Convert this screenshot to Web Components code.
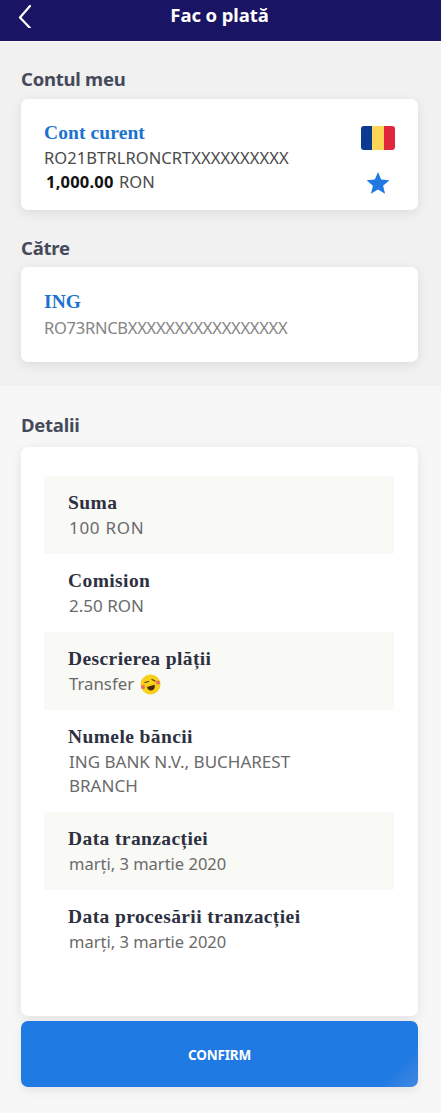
<!DOCTYPE html>
<html lang="ro"><head><meta charset="utf-8"><title>Fac o plată</title>
<style>
html,body{margin:0;padding:0;background:#f7f7f7}
body{width:441px;height:1113px;overflow:hidden;font-family:"Noto Sans","Open Sans",sans-serif}
</style></head><body>
<pay-app></pay-app>
<script>
const sans='"Noto Sans","Open Sans",sans-serif', serif='"Liberation Serif","DejaVu Serif",serif';
function def(name,css,html){
  customElements.define(name,class extends HTMLElement{
    constructor(){super();const s=this.attachShadow({mode:'open'});s.innerHTML=`<style>${css}</style>${html}`;}
  });
}
def('top-bar',`:host{display:flex;align-items:center;justify-content:center;position:relative;height:41px;background:#1a1464;color:#fff;border-bottom:1px solid #fafafa;font:700 18.5px/1 ${sans};letter-spacing:-.1px}
  svg{position:absolute;left:18px;top:4px}
  span{margin-top:-11px;margin-left:-2px}`,
 `<svg width="14" height="24" viewBox="0 0 14 24" fill="none" stroke="#fff" stroke-width="2.2" stroke-linecap="round" stroke-linejoin="round"><path d="M12 2 2 13.5 12 24"/></svg><span><slot></slot></span>`);
def('section-title',`:host{display:block;font:700 18.500px/24px ${sans};color:#454a5a;letter-spacing:-.25px}`,`<slot></slot>`);
def('white-card',`:host{display:block;background:#fff;border-radius:7px;box-shadow:0 3px 12px rgba(0,0,0,.09);box-sizing:border-box}`,`<slot></slot>`);
def('acct-head',`:host{display:block;font:700 19.500px/24px ${serif};letter-spacing:.1px;color:#1a73cf;margin-bottom:1px}`,`<slot></slot>`);
def('acct-line',`:host{display:block;font:400 16.500px/24px ${sans};letter-spacing:var(--ls,.07px);color:var(--c,#4a4a4a)}
  ::slotted(b){color:#111;font-weight:700;margin-left:2px;margin-right:1px;letter-spacing:.2px}`,`<slot></slot>`);
def('ro-flag',`:host{display:flex;width:34px;height:24px;border-radius:3px;overflow:hidden}
  i{flex:1}`,`<i style="background:#0b3a94"></i><i style="background:#fdd655"></i><i style="background:#e0273e"></i>`);
def('star-icon',`:host{display:block;width:24px;height:24px}svg{display:block}`,
 `<svg width="24" height="24" viewBox="0 0 24 24"><path fill="#2079e0" d="M12 1l3.200 7.600 8.200.7-6.300 5.400 1.950 8-7.050-4.300-7.050 4.300 1.950-8L.6 9.300l8.200-.7z"/></svg>`);
def('detail-row',`:host{display:block;padding:14px 24px 14px;}
  :host([shade]){background:#f9f9f6}
  .l{font:700 19.500px/26px ${serif};letter-spacing:.4px;color:#2d3040}
  .v{font:400 var(--fs,16.800px)/24px ${sans};letter-spacing:var(--ls,0);color:#6a6a6a;margin-left:1px}`,
 `<div class="l"><slot name="label"></slot></div><div class="v"><slot></slot></div>`);
def('emoji-laugh',`:host{display:inline-block;width:21px;height:21px;vertical-align:-5px;margin-left:2px}svg{display:block}`,
 `<svg width="21" height="21" viewBox="0 0 21 21"><circle cx="10.500" cy="10.500" r="10" fill="#f7cf1c"/><circle cx="3" cy="13" r="2" fill="#ef6a5e"/><circle cx="18" cy="8.500" r="2" fill="#ef6a5e"/><path d="M5 8.500 8.500 7.500M12 5.500l3 1.500" stroke="#5a4000" stroke-width="1.300" stroke-linecap="round"/><path d="M7 13 14.500 10.800C15.500 13.500 14 16.200 11.500 16.500 9.200 16.800 7.500 15.300 7 13z" fill="#4a2a00"/></svg>`);
def('confirm-button',`:host{display:flex;align-items:center;justify-content:center;box-sizing:border-box;padding-top:4px;height:66px;border-radius:7px;background:linear-gradient(135deg,#1f7ae3 0 91%,#4287e0 100%);color:#fff;font:700 13.500px/1 ${sans};letter-spacing:-.2px;box-shadow:0 4px 10px rgba(0,0,0,.08)}`,`<slot></slot>`);
def('pay-app',`:host{display:block;width:441px;height:1113px;overflow:hidden;background:#f7f7f7}
  .upper{height:344px;background:#f1f1f1;box-sizing:border-box;padding:25px 23px 0 21px}
  .lower{box-sizing:border-box;padding:27px 23px 0 21px}
  .c1{height:111px;margin-top:7px;padding:22px 23px 0 23px;display:flex;justify-content:space-between}
  .side{display:flex;flex-direction:column;align-items:center;gap:21px;padding-top:5px}
  .t2{margin-top:26px}
  .c2{height:95px;margin-top:7px;padding:23px 23px 0}
  .c3{height:569px;padding:29px 24px 0 23px;margin-top:10px}
  confirm-button{margin-top:5px}
  .h{margin-top:8px}`,
 `<top-bar>Fac o plată</top-bar>
 <div class="upper">
  <section-title>Contul meu</section-title>
  <white-card class="c1 h">
    <div>
      <acct-head>Cont curent</acct-head>
      <acct-line>RO21BTRLRONCRTXXXXXXXXXX</acct-line>
      <acct-line><b>1,000.00</b> RON</acct-line>
    </div>
    <div class="side"><ro-flag></ro-flag><star-icon></star-icon></div>
  </white-card>
  <section-title class="t2">Către</section-title>
  <white-card class="c2">
    <acct-head>ING</acct-head>
    <acct-line style="--c:#858585;--ls:-.28px;margin-top:2px">RO73RNCBXXXXXXXXXXXXXXXXX</acct-line>
  </white-card>
 </div>
 <div class="lower">
  <section-title>Detalii</section-title>
  <white-card class="c3">
    <detail-row shade style="--ls:.7px;--fs:17px"><span slot="label">Suma</span>100 RON</detail-row>
    <detail-row style="--fs:17px"><span slot="label">Comision</span>2.50 RON</detail-row>
    <detail-row shade><span slot="label">Descrierea plății</span>Transfer <emoji-laugh></emoji-laugh></detail-row>
    <detail-row style="--fs:17px"><span slot="label">Numele băncii</span>ING BANK N.V., BUCHAREST<br>BRANCH</detail-row>
    <detail-row shade style="--fs:16.500px"><span slot="label">Data tranzacției</span>marți, 3 martie 2020</detail-row>
    <detail-row style="--fs:16.500px"><span slot="label">Data procesării tranzacției</span>marți, 3 martie 2020</detail-row>
  </white-card>
  <confirm-button>CONFIRM</confirm-button>
 </div>`);
</script>
</body></html>
